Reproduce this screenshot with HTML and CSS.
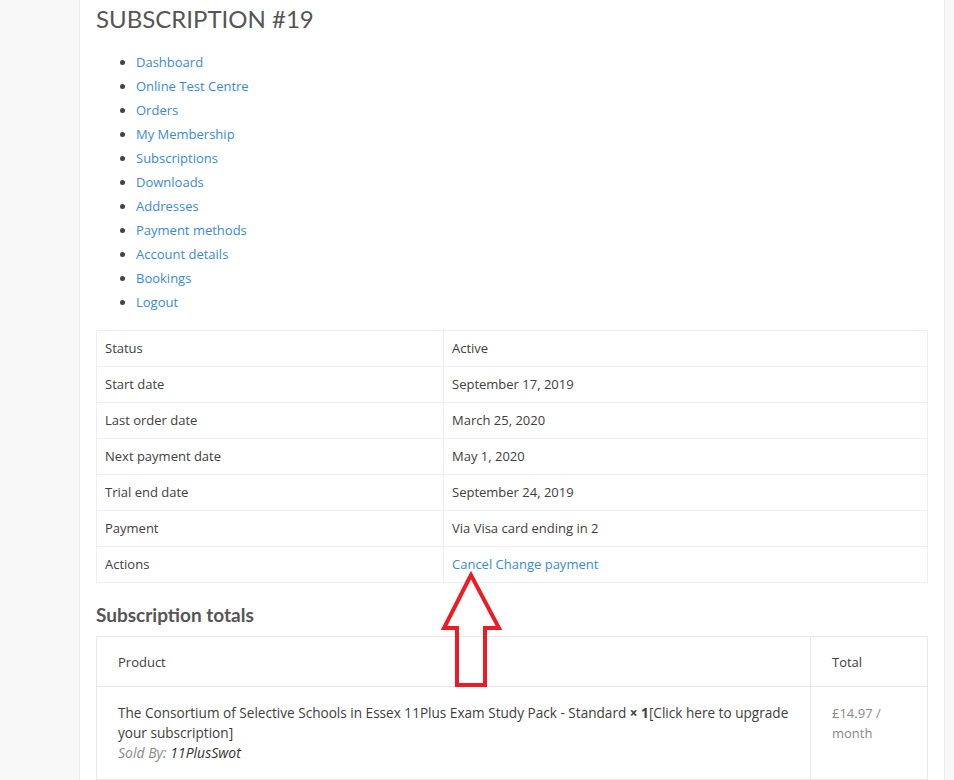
FILE: index.html
```html
<!DOCTYPE html>
<html>
<head>
<meta charset="utf-8">
<link rel="stylesheet" href="styles.css">
</head>
<body>
<div class="page">
  <div class="side"></div>
  <main class="content">
    <h1 class="title">SUBSCRIPTION #19</h1>
    <ul class="nav">
      <li><a href="#">Dashboard</a></li>
      <li><a href="#">Online Test Centre</a></li>
      <li><a href="#">Orders</a></li>
      <li><a href="#">My Membership</a></li>
      <li><a href="#">Subscriptions</a></li>
      <li><a href="#">Downloads</a></li>
      <li><a href="#">Addresses</a></li>
      <li><a href="#">Payment methods</a></li>
      <li><a href="#">Account details</a></li>
      <li><a href="#">Bookings</a></li>
      <li><a href="#">Logout</a></li>
    </ul>
    <div class="details-wrap">
      <table class="details">
        <tr><td class="label">Status</td><td>Active</td></tr>
        <tr><td class="label">Start date</td><td>September 17, 2019</td></tr>
        <tr><td class="label">Last order date</td><td>March 25, 2020</td></tr>
        <tr><td class="label">Next payment date</td><td>May 1, 2020</td></tr>
        <tr><td class="label">Trial end date</td><td>September 24, 2019</td></tr>
        <tr><td class="label">Payment</td><td>Via Visa card ending in 2</td></tr>
        <tr><td class="label">Actions</td><td><a href="#">Cancel</a> <a href="#">Change payment</a></td></tr>
      </table>
      <svg class="arrow" width="72" height="120" viewBox="0 0 72 120">
        <path d="M41 8 L14 61 L27 61 L27 118 L55 118 L55 61 L69 61 Z" fill="none" stroke="#ec1c24" stroke-width="4" stroke-linejoin="miter"/>
      </svg>
    </div>
    <h2 class="totals-title">Subscription totals</h2>
    <table class="totals">
      <tr><th class="prod">Product</th><th class="tot">Total</th></tr>
      <tr>
        <td class="prod">The Consortium of Selective Schools in Essex 11Plus Exam Study Pack - Standard <strong>× 1</strong>[Click here to upgrade your subscription]<br><span class="sold">Sold By: <span class="vendor">11PlusSwot</span></span></td>
        <td class="tot price">£14.97 / month</td>
      </tr>
    </table>
  </main>
  <div class="rside"></div>
</div>
</body>
</html>
```
FILE: styles.css
```css
html, body {
  margin: 0;
  padding: 0;
  background: #f8f8f8;
  font-family: "Open Sans", "Liberation Sans", sans-serif;
  font-size: 13px;
  color: #404040;
}
.page {
  display: flex;
  height: 780px;
  overflow: hidden;
}
.side {
  width: 79px;
  flex: none;
  border-right: 1px solid #ececec;
}
.rside {
  flex: 1;
  border-left: 1px solid #ececec;
}
.content {
  width: 832px;
  flex: none;
  background: #fff;
  padding: 0 16px;
}
a {
  color: #3a8bd3;
  text-decoration: none;
}
.title {
  font-family: Lato, "Liberation Sans", sans-serif;
  font-weight: 400;
  font-size: 24px;
  color: #555;
  margin: 4px 0 0;
  line-height: 30px;
}
.nav {
  margin: 16px 0 16px;
  padding-left: 40px;
  line-height: 24px;
  color: #444;
}
.details-wrap {
  position: relative;
}
.details {
  width: 832px;
  border-collapse: collapse;
  table-layout: fixed;
}
.details td {
  border: 1px solid #eceff6;
  padding: 8px 8px;
  line-height: 19px;
  color: #404040;
}
.details td.label {
  width: 330px;
}
.arrow {
  position: absolute;
  left: 334px;
  top: 237px;
}
.totals-title {
  font-family: Lato, "Liberation Sans", sans-serif;
  font-weight: 700;
  font-size: 19px;
  color: #555;
  margin: 19px 0 8px;
  line-height: 26px;
}
.totals {
  width: 832px;
  border-collapse: collapse;
  table-layout: fixed;
}
.totals th, .totals td {
  border: 1px solid #e8e8e8;
  text-align: left;
  font-weight: 400;
  line-height: 20px;
  color: #404040;
  vertical-align: top;
}
.totals th {
  padding: 15px 21px 14px;
}
.totals td {
  padding: 16px 12px 16px 21px;
  font-size: 13.6px;
}
.totals .tot {
  width: 74px;
}
.totals td.tot {
  padding-right: 21px;
}
.totals .price {
  color: #8a8a8a;
  font-size: 13px;
}
.sold {
  font-style: italic;
  color: #8a8a8a;
  font-size: 14px;
}
.vendor {
  color: #333;
}
strong {
  font-weight: 700;
}
```
